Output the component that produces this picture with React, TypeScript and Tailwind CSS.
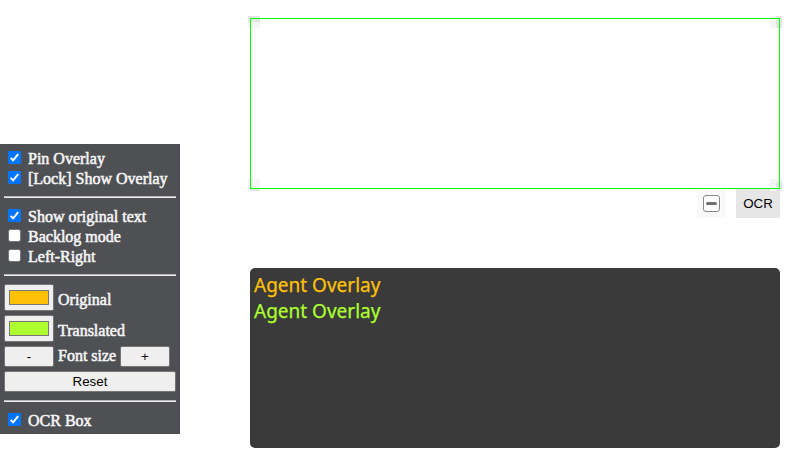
import type { ReactNode } from "react";

const serif =
  "font-['Liberation_Serif',serif] text-[16px] leading-[20px] text-[#f8f8f8] whitespace-nowrap [-webkit-text-stroke:0.55px_#f4f4f4]";
const button =
  "box-border h-[21px] rounded-[2px] border border-[#767676] bg-[#efefef] p-0 text-center font-['Liberation_Sans',sans-serif] text-[13.333px] leading-[19px] text-black";

function Check({ on = false, children }: { on?: boolean; children: ReactNode }) {
  return (
    <label className={`flex h-5 items-start pl-1 ${serif}`}>
      <svg className="mt-[3px] mr-[7px] h-[13px] w-[13px] shrink-0" viewBox="0 0 13 13">
        {on ? (
          <>
            <rect width="13" height="13" rx="1" fill="#0075ff" />
            <path d="M2.6 6.9 5.1 9.3 10.2 3.2" fill="none" stroke="white" strokeWidth="2" />
          </>
        ) : (
          <rect x="0.5" y="0.5" width="12" height="12" rx="2" fill="white" stroke="#767676" strokeDasharray="" />
        )}
      </svg>
      <span className="mt-px">{children}</span>
    </label>
  );
}

function Divider() {
  return <div className="my-2 h-[2px] border-t border-[#b5b5b5] bg-[#eeeeee]" />;
}

function ColorRow({ swatch, children }: { swatch: string; children: ReactNode }) {
  return (
    <div className={`mb-1 flex h-[27px] gap-1 ${serif}`}>
      <button className="box-border flex h-[27px] w-[50px] items-start rounded-[2px] border border-[#767676] bg-[#efefef] px-1 pt-[5px]">
        <span className={`box-border block h-[15px] w-full border border-[#777777] ${swatch}`} />
      </button>
      <span className="mt-[6px]">{children}</span>
    </div>
  );
}

function Corner({ className, inner }: { className: string; inner: string }) {
  return (
    <span className={`absolute h-3 w-3 bg-[#f5f5f5] ${className}`}>
      <span className={`absolute bg-[#e4e4e4] ${inner}`} />
    </span>
  );
}

export default function App() {
  return (
    <div className="flex h-[457px] w-[791px] overflow-hidden bg-white">
      <aside className="mt-[144px] h-[290px] w-[180px] shrink-0 bg-[#4f5054] p-1">
        <Check on>Pin Overlay</Check>
        <Check on>[Lock] Show Overlay</Check>
        <Divider />
        <Check on>Show original text</Check>
        <Check>Backlog mode</Check>
        <Check>Left-Right</Check>
        <Divider />
        <ColorRow swatch="bg-[#ffc107]">Original</ColorRow>
        <ColorRow swatch="bg-[#adff2f]">Translated</ColorRow>
        <div className={`mb-1 flex h-[21px] gap-1 ${serif}`}>
          <button className={`${button} w-[50px] [-webkit-text-stroke:0]`}>-</button>
          <span className="w-[58px]">Font size</span>
          <button className={`${button} w-[50px] [-webkit-text-stroke:0]`}>+</button>
        </div>
        <button className={`${button} block w-full`}>Reset</button>
        <Divider />
        <Check on>OCR Box</Check>
      </aside>

      <main className="ml-[70px] flex w-[530px] flex-col pt-[18px]">
        <section className="relative h-[171px] shrink-0">
          <Corner className="-top-[2px] -left-[2px]" inner="top-0 left-0 h-[6px] w-3" />
          <Corner className="-top-[2px] -right-[2px]" inner="top-0 right-0 h-3 w-[6px]" />
          <Corner className="-bottom-[2px] -left-[2px]" inner="bottom-0 left-[2px] h-[3px] w-[10px]" />
          <Corner className="-right-[2px] -bottom-[2px]" inner="right-0 bottom-0 h-[9px] w-[6px]" />
          <div className="absolute inset-0 border border-[#00ff00]" />
        </section>
        <div className="flex h-[29px] shrink-0 justify-end gap-[10px]">
          <button className="flex h-[29px] w-[29px] items-center justify-center bg-[#f9f9f9]">
            <svg className="h-[19px] w-[19px]" viewBox="0 0 19 19" fill="none">
              <rect x="1.5" y="1.5" width="16" height="16" rx="2.5" fill="white" stroke="#888888" />
              <path d="M5.5 9.5h8" stroke="#707070" strokeWidth="3" strokeLinecap="round" />
            </svg>
          </button>
          <button className="h-[29px] w-[44px] bg-[#e6e6e6] text-center font-['Liberation_Sans',sans-serif] text-[13.333px] leading-[29px] text-black">
            OCR
          </button>
        </div>
        <section className="mt-[50px] h-[180px] shrink-0 rounded-[5px] bg-[#3a3a3a] px-1 pt-[4px] font-['Noto_Sans',sans-serif] text-[19px] leading-[26px] [-webkit-text-stroke:0.25px_currentColor]">
          <p className="text-[#ffc107]">Agent Overlay</p>
          <p className="text-[#adff2f]">Agent Overlay</p>
        </section>
      </main>
    </div>
  );
}
